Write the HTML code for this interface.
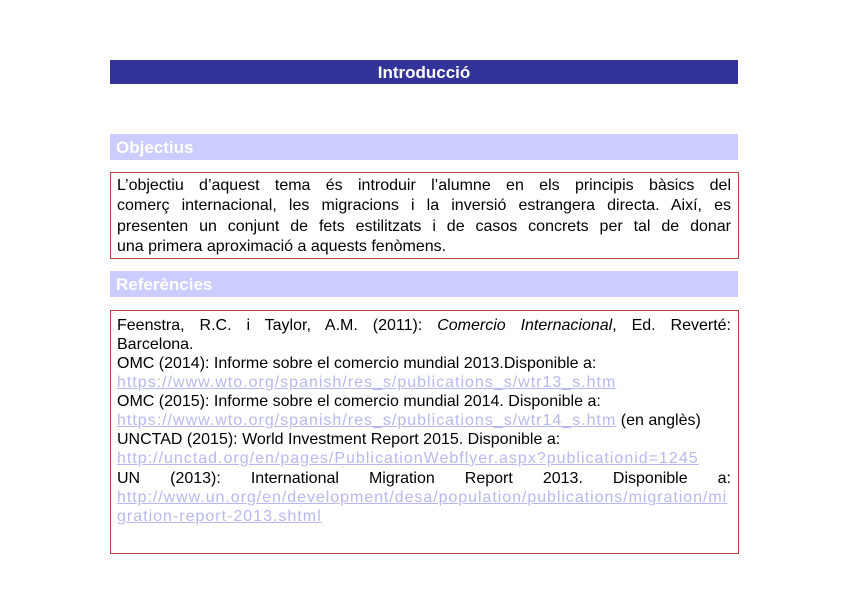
<!DOCTYPE html>
<html><head><meta charset="utf-8"><style>
body{margin:0;width:848px;height:599px;background:#fff;position:relative;font-family:"Liberation Sans",Arial,sans-serif;overflow:hidden}
.bar{position:absolute;left:110px;width:628px}
.h{top:60px;height:24px;background:#333399;color:#fff;font-weight:bold;font-size:17px;text-align:center;line-height:25px}
.s{height:26px;background:#ccccff;color:#fff;font-weight:bold;font-size:17px;line-height:27px;padding-left:6px;box-sizing:border-box}
.box{position:absolute;left:110px;width:629px;border:1px solid #c04048;box-sizing:border-box}
.l{position:absolute;left:117px;width:614px;font-size:16px;color:#000;white-space:nowrap}
.j{text-align:justify;text-align-last:justify}
.u{color:#b8b8f0;text-decoration:underline;letter-spacing:1px}
</style></head><body>
<div class="bar h">Introducció</div>
<div class="bar s" style="top:134px">Objectius</div>
<div class="box" style="top:172px;height:87px"></div>
<div class="l j" style="top:177px">L’objectiu d’aquest tema és introduir l’alumne en els principis bàsics del</div>
<div class="l j" style="top:197px">comerç internacional, les migracions i la inversió estrangera directa. Així, es</div>
<div class="l j" style="top:218px">presenten un conjunt de fets estilitzats i de casos concrets per tal de donar</div>
<div class="l" style="top:238px">una primera aproximació a aquests fenòmens.</div>
<div class="bar s" style="top:271px">Referències</div>
<div class="box" style="top:310px;height:244px"></div>
<div class="l j" style="top:317px">Feenstra, R.C. i Taylor, A.M. (2011): <i>Comercio Internacional</i>, Ed. Reverté:</div>
<div class="l" style="top:336px">Barcelona.</div>
<div class="l" style="top:355px">OMC (2014): Informe sobre el comercio mundial 2013.Disponible a:</div>
<div class="l u" style="top:374px">https://www.wto.org/spanish/res_s/publications_s/wtr13_s.htm</div>
<div class="l" style="top:393px">OMC (2015): Informe sobre el comercio mundial 2014. Disponible a:</div>
<div class="l" style="top:412px"><span class="u">https://www.wto.org/spanish/res_s/publications_s/wtr14_s.htm</span> (en anglès)</div>
<div class="l" style="top:431px">UNCTAD (2015): World Investment Report 2015. Disponible a:</div>
<div class="l u" style="top:450px">http://unctad.org/en/pages/PublicationWebflyer.aspx?publicationid=1245</div>
<div class="l j" style="top:470px">UN (2013): International Migration Report 2013. Disponible a:</div>
<div class="l u" style="top:489px;letter-spacing:0.95px">http://www.un.org/en/development/desa/population/publications/migration/mi</div>
<div class="l u" style="top:508px">gration-report-2013.shtml</div>
</body></html>
